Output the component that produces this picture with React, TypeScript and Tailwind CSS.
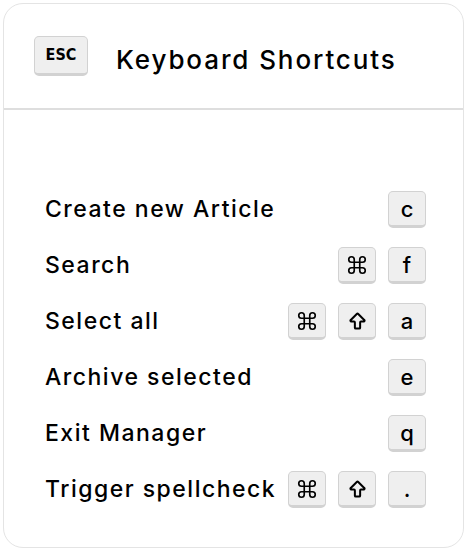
import React from "react";
import { Command, ArrowBigUp } from "lucide-react";

const shortcuts: { label: string; keys: string[] }[] = [
  { label: "Create new Article", keys: ["c"] },
  { label: "Search", keys: ["⌘", "f"] },
  { label: "Select all", keys: ["⌘", "⇧", "a"] },
  { label: "Archive selected", keys: ["e"] },
  { label: "Exit Manager", keys: ["q"] },
  { label: "Trigger spellcheck", keys: ["⌘", "⇧", "."] },
];

function Key({ k }: { k: string }) {
  let content: React.ReactNode = k;
  if (k === "⌘") content = <Command className="h-[22px] w-[22px]" strokeWidth={1.8} />;
  if (k === "⇧") content = <ArrowBigUp className="h-[21px] w-[21px]" strokeWidth={2.3} />;
  return (
    <kbd className="flex h-[37px] w-[38px] items-center justify-center rounded-[5px] border border-b-[3px] border-[#d2d2d2] bg-[#efefef] pt-[1px] font-[Inter,sans-serif] text-[22px] font-medium text-black">
      {content}
    </kbd>
  );
}

export default function App() {
  return (
    <div className="h-[552px] w-[464px] bg-white p-[3px] pr-0 font-[Inter,sans-serif]">
      <div className="flex h-[545px] w-[461px] flex-col rounded-[20px] border border-[#e4e4e4] bg-white">
        <div className="flex h-[106px] items-center gap-[28px] border-b-2 border-[#dedede] pl-[30px]">
          <kbd className="flex h-[40px] w-[54px] items-center justify-center rounded-[5px] border border-b-[3px] border-[#d2d2d2] bg-[#efefef] font-[DejaVu_Sans_Condensed,sans-serif] text-[16px] font-bold text-black">
            ESC
          </kbd>
          <h1 className="mt-[6px] text-[26px] font-medium tracking-[1.9px] text-black">Keyboard Shortcuts</h1>
        </div>
        <div className="flex flex-col gap-[19px] pl-[41px] pr-[37px] pt-[81px]">
          {shortcuts.map((s) => (
            <div key={s.label} className="flex items-center justify-between">
              <span className="text-[23px] font-medium tracking-[1.5px] text-black">{s.label}</span>
              <div className="flex gap-[12px]">
                {s.keys.map((k, i) => (
                  <Key key={i} k={k} />
                ))}
              </div>
            </div>
          ))}
        </div>
      </div>
    </div>
  );
}
